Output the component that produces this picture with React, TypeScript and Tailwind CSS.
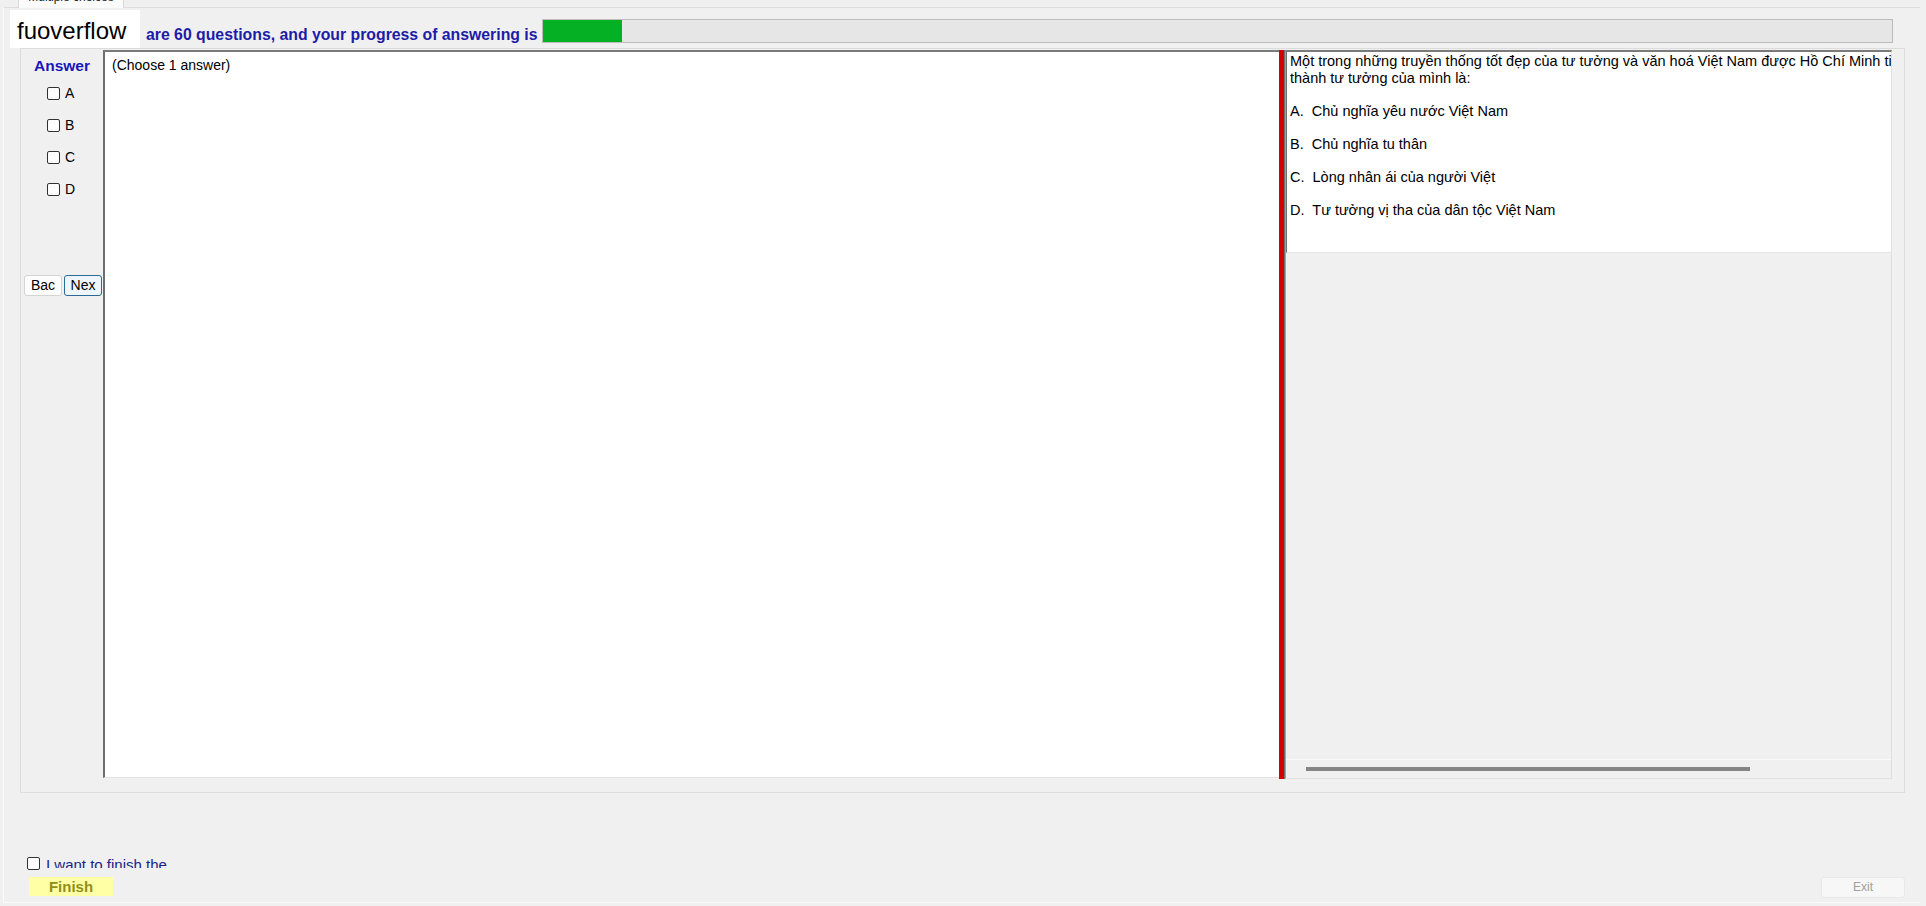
import React from "react";

const options = ["A", "B", "C", "D"];

const questionLines = [
  "A.  Chủ nghĩa yêu nước Việt Nam",
  "B.  Chủ nghĩa tu thân",
  "C.  Lòng nhân ái của người Việt",
  "D.  Tư tưởng vị tha của dân tộc Việt Nam",
];

const Box = () => (
  <span className="block w-[13px] h-[13px] border border-[#333333] rounded-[2px] bg-white shrink-0" />
);

const App = () => {
  return (
    <div className="w-[1926px] h-[906px] bg-[#f0f0f0] overflow-hidden font-['Liberation_Sans',Arial,sans-serif] text-black">
      {/* tab strip */}
      <div className="h-[7px] flex">
        <div className="ml-[18px] w-[106px] h-[8px] bg-[#fbfbfb] border-x border-[#d9d9d9] overflow-hidden text-[12px] leading-[12px] text-center text-[#222]">
          <div className="-mt-[9px]">Multiple choices</div>
        </div>
      </div>

      {/* tab page */}
      <div className="ml-[3px] w-[1917px] h-[896px] border-t border-l border-b border-t-[#dcdcdc] border-l-[#fafafa] border-b-[#fafafa] flex flex-col">
        {/* header */}
        <div className="mt-[2px] h-[38px] flex">
          <div className="ml-[6px] w-[130px] h-[38px] bg-white flex items-center pl-[7px] pt-[3px] text-[24px] leading-[24px]">
            fuoverflow
          </div>
          <div className="ml-[6px] self-end mb-[5px] text-[15.8px] leading-[16px] font-bold text-[#1c1ca8] whitespace-nowrap">
            are 60 questions, and your progress of answering is
          </div>
          <div className="ml-[4px] mr-[27px] flex-1 self-center mt-[4px] h-[24px] bg-[#e6e6e6] border border-[#bcbcbc] flex">
            <div className="w-[79px] h-full bg-[#06b025]" />
          </div>
        </div>

        {/* group */}
        <div className="ml-[16px] w-[1885px] h-[745px] border border-[#dcdcdc] flex items-start pt-[1px]">
          {/* answer column */}
          <div className="w-[82px] flex flex-col">
            <div className="mt-[7px] text-center text-[15.5px] leading-[18px] font-bold text-[#1818b8]">Answer</div>
            <div className="mt-[2px] flex flex-col">
              {options.map((o) => (
                <div key={o} className="h-[32px] pl-[26px] flex items-center gap-[5px] text-[14px]">
                  <Box />
                  <span>{o}</span>
                </div>
              ))}
            </div>
            <div className="mt-[70px] pl-[3px] flex gap-[2px] text-[14px] leading-[19px]">
              <div className="w-[38px] h-[21px] border border-[#d4d4d4] rounded-[3px] bg-[#fdfdfd] text-center overflow-hidden">Bac</div>
              <div className="w-[38px] h-[21px] border border-[#2b6a96] rounded-[3px] bg-[#eef6fc] text-center overflow-hidden">Nex</div>
            </div>
          </div>

          {/* middle box */}
          <div className="w-[1176px] h-[728px] bg-white border-l-2 border-t-2 border-b border-l-[#6e6e6e] border-t-[#7a7a7a] border-b-[#e3e3e3] pl-[7px] pt-[5px] text-[14px] leading-[16px]">
            (Choose 1 answer)
          </div>

          {/* red divider */}
          <div className="w-[6px] h-[729px] bg-[#d40000] border-r border-[#707070]" />

          {/* question panel */}
          <div className="w-[607px] h-[729px] flex flex-col border-t-2 border-t-[#7a7a7a] border-l border-l-[#a0a0a0] border-r border-r-[#e0e0e0] border-b border-b-[#e0e0e0]">
            <div className="h-[201px] bg-white border-l border-[#707070] border-b border-b-[#e4e4e4] pl-[3px] pt-[1px] overflow-hidden text-[14.5px] leading-[16.5px] whitespace-pre">
              <div>Một trong những truyền thống tốt đẹp của tư tưởng và văn hoá Việt Nam được Hồ Chí Minh tiếp thu và phát triển</div>
              <div>thành tư tưởng của mình là:</div>
              {questionLines.map((l) => (
                <div key={l} className="mt-[16.5px]">{l}</div>
              ))}
            </div>
            <div className="flex-1" />
            <div className="h-[19px] border-t border-[#fafafa] flex items-center">
              <div className="ml-[20px] w-[444px] h-[4px] bg-[#858585]" />
            </div>
          </div>
        </div>

        {/* finish checkbox */}
        <div className="mt-[64px] ml-[23px] h-[13px] flex items-start gap-[6px]">
          <Box />
          <div className="w-[125px] h-[12px] overflow-hidden text-[15px] leading-[17px] text-[#1c1c8c] whitespace-nowrap -mt-[1px]">
            I want to finish the
          </div>
        </div>

        {/* buttons */}
        <div className="mt-[7px] flex justify-between items-start">
          <div className="ml-[25px] w-[84px] h-[19px] bg-[#ffffa6] text-center text-[15px] leading-[19px] font-bold text-[#8f8f18]">
            Finish
          </div>
          <div className="mr-[15px] w-[84px] h-[21px] bg-[#f7f7f7] border border-[#e8e8e8] rounded-[3px] text-center text-[12px] leading-[19px] text-[#a0a0a0]">
            Exit
          </div>
        </div>
      </div>
    </div>
  );
};

export default App;
